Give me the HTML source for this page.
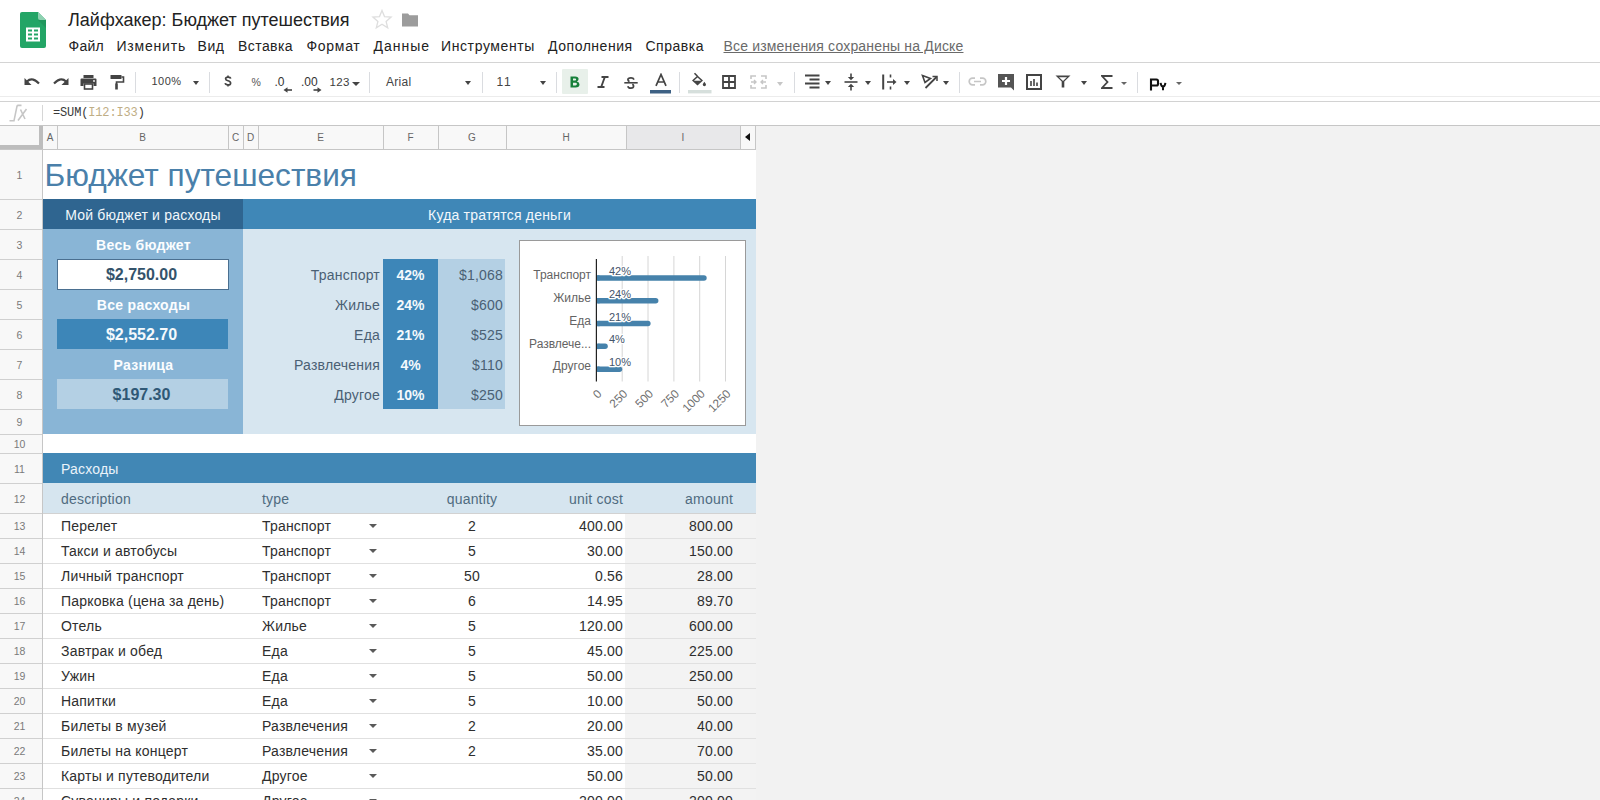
<!DOCTYPE html><html><head><meta charset='utf-8'><style>
*{margin:0;padding:0;box-sizing:border-box}
html,body{width:1600px;height:800px;overflow:hidden;background:#fff;font-family:"Liberation Sans", sans-serif}
.a{position:absolute}
.t{position:absolute;white-space:nowrap;line-height:1}
.menu{font-size:14px;color:#222;letter-spacing:0.25px}
.sep{position:absolute;width:1px;background:#dadce0;top:72px;height:21px}
.dd{position:absolute;width:0;height:0;border-left:3.5px solid transparent;border-right:3.5px solid transparent;border-top:4px solid #444}
.rh{position:absolute;left:-1.5px;width:42px;text-align:center;font-size:10.5px;color:#7a7a7a;line-height:1}
.c{position:absolute;white-space:nowrap;font-size:14px;letter-spacing:0.2px;line-height:1}
</style></head><body>
<svg class="a" style="left:20px;top:12px" width="26" height="36" viewBox="0 0 26 36">
<path d="M2 0 H18 L26 8 V34 Q26 36 24 36 H2 Q0 36 0 34 V2 Q0 0 2 0 Z" fill="#23a566"/>
<path d="M18 0 L26 8 H20 Q18 8 18 6 Z" fill="#8ed1b1"/>
<path d="M18 8 L26 16 V8 Z" fill="#1e8e57" opacity="0.6"/>
<rect x="6" y="15.5" width="14" height="14" fill="#fff"/>
<rect x="8" y="17.5" width="4" height="2" fill="#23a566"/><rect x="14" y="17.5" width="4" height="2" fill="#23a566"/>
<rect x="8" y="21.5" width="4" height="2" fill="#23a566"/><rect x="14" y="21.5" width="4" height="2" fill="#23a566"/>
<rect x="8" y="25.5" width="4" height="2" fill="#23a566"/><rect x="14" y="25.5" width="4" height="2" fill="#23a566"/>
</svg>
<div class="t" style="left:68px;top:11px;font-size:18px;color:#222">Лайфхакер: Бюджет путешествия</div>
<svg class="a" style="left:369.5px;top:7px" width="24" height="24" viewBox="0 0 24 24"><path d="M12 3.5l2.5 6.1 6.6.5-5 4.3 1.6 6.4L12 17.3l-5.7 3.5 1.6-6.4-5-4.3 6.6-.5z" fill="none" stroke="#dedede" stroke-width="1.3"/></svg>
<svg class="a" style="left:401px;top:12px" width="18" height="16" viewBox="0 0 18 16"><path d="M1 1.5h6l1.5 1.8H17v11.2H1z" fill="#9c9c9c"/></svg>
<div class="t menu" style="left:68.5px;top:39px;letter-spacing:0.25px">Файл</div>
<div class="t menu" style="left:116.5px;top:39px;letter-spacing:0.79px">Изменить</div>
<div class="t menu" style="left:197.5px;top:39px;letter-spacing:0.55px">Вид</div>
<div class="t menu" style="left:238px;top:39px;letter-spacing:0.43px">Вставка</div>
<div class="t menu" style="left:306.5px;top:39px;letter-spacing:0.7px">Формат</div>
<div class="t menu" style="left:373.5px;top:39px;letter-spacing:1.0px">Данные</div>
<div class="t menu" style="left:441px;top:39px;letter-spacing:0.61px">Инструменты</div>
<div class="t menu" style="left:548px;top:39px;letter-spacing:0.54px">Дополнения</div>
<div class="t menu" style="left:645.5px;top:39px;letter-spacing:0.5px">Справка</div>
<div class="t menu" style="left:723.5px;top:39px;color:#6a6a6a;letter-spacing:0.17px;text-decoration:underline;text-underline-offset:1px">Все изменения сохранены на Диске</div>
<div class="a" style="left:0;top:62px;width:1600px;height:1px;background:#d4d4d4"></div>
<div class="a" style="left:0;top:96px;width:1600px;height:1px;background:#ececec"></div>
<div class="a" style="left:0;top:101px;width:1600px;height:1px;background:#d2d2d2"></div>
<div class="sep" style="left:135px"></div>
<div class="sep" style="left:209px"></div>
<div class="sep" style="left:369px"></div>
<div class="sep" style="left:482px"></div>
<div class="sep" style="left:556px"></div>
<div class="sep" style="left:679px"></div>
<div class="sep" style="left:794px"></div>
<div class="sep" style="left:959px"></div>
<div class="sep" style="left:1137px"></div>
<svg class="a" style="left:23px;top:75px" width="18" height="14" viewBox="0 0 18 14"><path d="M4 6.5 Q9 1.5 16 8.5" fill="none" stroke="#444" stroke-width="2.2"/><path d="M1.5 3 V10 H8.5 Z" fill="#444"/></svg>
<svg class="a" style="left:52px;top:75px" width="18" height="14" viewBox="0 0 18 14"><path d="M14 6.5 Q9 1.5 2 8.5" fill="none" stroke="#444" stroke-width="2.2"/><path d="M16.5 3 V10 H9.5 Z" fill="#444"/></svg>
<svg class="a" style="left:80px;top:74px" width="17" height="16" viewBox="0 0 17 16"><rect x="3.5" y="1" width="10" height="3" fill="#444"/><path d="M0.5 5.5 Q0.5 4.5 1.5 4.5 H15.5 Q16.5 4.5 16.5 5.5 V12 H13.5 V9.5 H3.5 V12 H0.5 Z" fill="#444"/><rect x="4.5" y="10" width="8" height="5" fill="none" stroke="#444" stroke-width="1.6"/><circle cx="14" cy="7" r="0.9" fill="#fff"/></svg>
<svg class="a" style="left:110px;top:74px" width="15" height="16" viewBox="0 0 15 16"><rect x="0.5" y="1" width="11" height="4" rx="0.5" fill="#444"/><path d="M11.5 3 H13.5 V8 H6.5 V10" fill="none" stroke="#444" stroke-width="1.6"/><rect x="5.2" y="9.5" width="2.6" height="6" fill="#444"/></svg>
<div class="t" style="left:151.5px;top:76px;font-size:11px;letter-spacing:0.5px;color:#3c3c3c">100%</div>
<div class="dd" style="left:193px;top:81px"></div>
<svg class="a" style="left:224px;top:75px" width="8" height="12" viewBox="0 0 8 12"><path d="M6.6 3.6 Q6.4 2.1 4 2.1 Q1.6 2.1 1.6 3.8 Q1.6 5.2 4 5.8 Q6.6 6.4 6.6 8.2 Q6.6 9.9 4 9.9 Q1.5 9.9 1.2 8.2" stroke="#444" stroke-width="1.7" fill="none"/><path d="M4 0.6V2.3M4 9.7V11.4" stroke="#444" stroke-width="1.5"/></svg>
<div class="t" style="left:251.5px;top:76.5px;font-size:10.5px;color:#555">%</div>
<div class="t" style="left:274.5px;top:76px;font-size:12px;color:#333">.0</div>
<svg class="a" style="left:282.5px;top:87px" width="10" height="6" viewBox="0 0 10 6"><path d="M4 3H9" stroke="#444" stroke-width="1.6"/><path d="M0.5 3L4.5 0.2V5.8Z" fill="#444"/></svg>
<div class="t" style="left:301px;top:76px;font-size:12px;color:#333">.00</div>
<svg class="a" style="left:312.5px;top:87px" width="9" height="6" viewBox="0 0 9 6"><path d="M0.5 3H5" stroke="#444" stroke-width="1.6"/><path d="M8.5 3L4.5 0.2V5.8Z" fill="#444"/></svg>
<div class="t" style="left:329.5px;top:76.5px;font-size:11.5px;letter-spacing:0.4px;color:#3c3c3c">123</div>
<div class="dd" style="left:351.5px;top:82px;border-left-width:4px;border-right-width:4px"></div>
<div class="t" style="left:386px;top:76px;font-size:12px;letter-spacing:0.3px;color:#444">Arial</div>
<div class="dd" style="left:465px;top:81px"></div>
<div class="t" style="left:496.5px;top:76px;font-size:12px;letter-spacing:1.6px;color:#444">11</div>
<div class="dd" style="left:540px;top:81px"></div>
<div class="a" style="left:562px;top:69px;width:26px;height:25px;background:#e8f0ea;border-radius:1px"></div>
<svg class="a" style="left:570px;top:76px" width="10" height="12" viewBox="0 0 10 12"><path d="M0.5 0.5H5.2Q8.6 0.5 8.6 3.1Q8.6 4.9 6.9 5.6Q9.5 6.2 9.5 8.5Q9.5 11.5 5.6 11.5H0.5Z" fill="#17803a"/><path d="M3 2.5H5Q6.2 2.5 6.2 3.5Q6.2 4.6 5 4.6H3ZM3 6.8H5.4Q6.9 6.8 6.9 8.1Q6.9 9.5 5.4 9.5H3Z" fill="#e8f0ea"/></svg>
<svg class="a" style="left:597px;top:76px" width="12" height="12" viewBox="0 0 12 12"><path d="M4.5 1H11.5M0.5 11H7.5M7.8 1L4.2 11" stroke="#444" stroke-width="1.9" fill="none"/></svg>
<svg class="a" style="left:624px;top:77px" width="14" height="12" viewBox="0 0 14 12"><path d="M0.3 5.8H13.7" stroke="#444" stroke-width="1.6"/><path d="M10 2.6 Q9.4 0.9 7 0.9 Q3.9 0.9 3.9 2.8 Q3.9 3.9 5.5 4.6" stroke="#444" stroke-width="1.7" fill="none"/><path d="M8.3 7.2 Q9.6 7.9 9.6 9 Q9.6 11.1 6.9 11.1 Q4.3 11.1 3.8 9.2" stroke="#444" stroke-width="1.7" fill="none"/></svg>
<svg class="a" style="left:650px;top:73px" width="22" height="21" viewBox="0 0 22 21"><path d="M6 12.8L11 1.5L16 12.8M7.8 9H14.2" stroke="#444" stroke-width="1.7" fill="none"/><rect x="0" y="17" width="21" height="3.5" fill="#3e6184"/></svg>
<svg class="a" style="left:688px;top:72px" width="24" height="22" viewBox="0 0 24 22"><path d="M9.5 3.6L15 8.6L9.5 13.6L4 8.6Z" fill="#444"/><path d="M5.9 8.7L9.5 5.4L13.1 8.7Z" fill="#fff"/><path d="M6.5 1.2L9.3 4" stroke="#444" stroke-width="1.6"/><path d="M16.3 9.8 Q18 12 18 12.6 A1.6 1.6 0 0 1 14.8 12.6 Q14.8 12 16.3 9.8Z" fill="#444"/><rect x="0" y="18" width="23.5" height="3.4" fill="#d6dfdc"/></svg>
<svg class="a" style="left:722px;top:75px" width="14" height="14" viewBox="0 0 14 14"><path d="M1 1H13V13H1ZM7 1V13M1 7H13" stroke="#444" stroke-width="1.8" fill="none"/></svg>
<svg class="a" style="left:750px;top:75px" width="17" height="14" viewBox="0 0 17 14"><path d="M1 4V1H6M11 1H16V4M16 10V13H11M6 13H1V10" stroke="#c6c6c6" stroke-width="1.6" fill="none"/><path d="M1 7H6M4 5L6 7L4 9M16 7H11M13 5L11 7L13 9" stroke="#c6c6c6" stroke-width="1.4" fill="none"/></svg>
<div class="dd" style="left:777px;top:82px;border-top-color:#c6c6c6"></div>
<svg class="a" style="left:805px;top:74px" width="15" height="15" viewBox="0 0 15 15"><path d="M0 1.5H14.5M4.5 5.5H14.5M0 9.5H14.5M4.5 13.5H14.5" stroke="#444" stroke-width="1.8"/></svg>
<div class="dd" style="left:825px;top:81px"></div>
<svg class="a" style="left:844px;top:73px" width="14" height="18" viewBox="0 0 14 18"><path d="M0.5 9H13.5" stroke="#444" stroke-width="1.6"/><path d="M7 0.5V5" stroke="#444" stroke-width="1.6"/><path d="M3.8 4L7 7.2L10.2 4Z" fill="#444"/><path d="M7 17.5V13" stroke="#444" stroke-width="1.6"/><path d="M3.8 14L7 10.8L10.2 14Z" fill="#444"/></svg>
<div class="dd" style="left:864.5px;top:81px"></div>
<svg class="a" style="left:882px;top:74px" width="15" height="16" viewBox="0 0 15 16"><path d="M1.2 0.5V15.5" stroke="#444" stroke-width="2"/><path d="M8.5 0.5V3.5M8.5 12.5V15.5" stroke="#444" stroke-width="1.6"/><path d="M5 8H12" stroke="#444" stroke-width="1.6"/><path d="M11 5L14.5 8L11 11Z" fill="#444"/></svg>
<div class="dd" style="left:904px;top:81px"></div>
<svg class="a" style="left:921px;top:74px" width="17" height="15" viewBox="0 0 17 15"><path d="M1.5 1.5L9.5 4.5L4 8.5Z" fill="none" stroke="#444" stroke-width="1.6"/><path d="M4.5 14L15.5 3" stroke="#444" stroke-width="1.8"/><path d="M11.5 2.5H16V7" stroke="#444" stroke-width="1.5" fill="none"/></svg>
<div class="dd" style="left:943px;top:81px"></div>
<svg class="a" style="left:968px;top:77px" width="19" height="9" viewBox="0 0 19 9"><path d="M7 1.2H4.5A3.3 3.3 0 0 0 4.5 7.8H7M12 1.2H14.5A3.3 3.3 0 0 1 14.5 7.8H12M6 4.5H13" stroke="#c6c6c6" stroke-width="1.7" fill="none"/></svg>
<svg class="a" style="left:998px;top:74px" width="16" height="17" viewBox="0 0 16 17"><path d="M0 0H16V16.5L13 13.5H0Z" fill="#555"/><path d="M8 3V11M4 7H12" stroke="#fff" stroke-width="2.2"/></svg>
<svg class="a" style="left:1026px;top:74px" width="16" height="16" viewBox="0 0 16 16"><rect x="1" y="1" width="14" height="14" fill="none" stroke="#444" stroke-width="2"/><path d="M5 7V12M8 5V12M11 8.5V12" stroke="#444" stroke-width="1.6"/></svg>
<svg class="a" style="left:1055px;top:75px" width="16" height="13" viewBox="0 0 16 13"><path d="M0.5 0.5H15.5L9.3 6.5V12.5H6.7V6.5Z" fill="#444"/><path d="M4 2.3H12L8 6Z" fill="#fff"/></svg>
<div class="dd" style="left:1081px;top:81px"></div>
<svg class="a" style="left:1101px;top:75px" width="12" height="14" viewBox="0 0 12 14"><path d="M11.5 1H1L6.5 7L1 13H11.5" stroke="#444" stroke-width="1.8" fill="none"/></svg>
<div class="dd" style="left:1121px;top:82px;border-left-width:3px;border-right-width:3px;border-top-width:3px;border-top-color:#666"></div>
<svg class="a" style="left:1148px;top:75.5px" width="22" height="16" viewBox="0 0 22 16"><path d="M3 14.5V3.5H8.5Q10 3.5 10 5V8Q10 9.5 8.5 9.5H3" stroke="#111" stroke-width="2.1" fill="none"/><path d="M12.6 6.8Q13 10.2 15 10.6Q17 10.2 17.4 6.8M15 10.4V14.3" stroke="#111" stroke-width="2" fill="none"/></svg>
<div class="dd" style="left:1176px;top:82px;border-left-width:3px;border-right-width:3px;border-top-width:3px;border-top-color:#666"></div>
<svg class="a" style="left:4px;top:100px" width="32" height="25" viewBox="0 0 32 25"><path d="M5.5 20.8H10L13 6.2Q13.2 5.4 14.2 5.4H17.5M14 20.5L22.5 9M16.5 9.5L21 19" stroke="#c6c6c6" stroke-width="1.6" fill="none"/></svg>
<div class="a" style="left:42px;top:105px;width:1px;height:16px;background:#d6d6d6"></div>
<div class="t" style="left:53px;top:106.5px;font-family:'Liberation Mono',monospace;font-size:12px;letter-spacing:-0.15px;color:#3a3a3a">=SUM(<span style="color:#bfae85">I12:I33</span>)</div>
<div class="a" style="left:0;top:125px;width:1600px;height:1px;background:#c6c6c6"></div>
<div class="a" style="left:756px;top:126px;width:844px;height:674px;background:#f2f2f2"></div>
<div class="a" style="left:0;top:126px;width:756px;height:23px;background:#f8f8f8"></div>
<div class="a" style="left:627px;top:126px;width:113px;height:23px;background:#e8e8ea"></div>
<div class="a" style="left:57px;top:126px;width:1px;height:23px;background:#c6c6c6"></div>
<div class="t" style="left:43px;width:14px;top:132.5px;text-align:center;font-size:10px;color:#666">A</div>
<div class="a" style="left:228px;top:126px;width:1px;height:23px;background:#c6c6c6"></div>
<div class="t" style="left:57px;width:171px;top:132.5px;text-align:center;font-size:10px;color:#666">B</div>
<div class="a" style="left:243px;top:126px;width:1px;height:23px;background:#c6c6c6"></div>
<div class="t" style="left:228px;width:15px;top:132.5px;text-align:center;font-size:10px;color:#666">C</div>
<div class="a" style="left:258px;top:126px;width:1px;height:23px;background:#c6c6c6"></div>
<div class="t" style="left:243px;width:15px;top:132.5px;text-align:center;font-size:10px;color:#666">D</div>
<div class="a" style="left:383px;top:126px;width:1px;height:23px;background:#c6c6c6"></div>
<div class="t" style="left:258px;width:125px;top:132.5px;text-align:center;font-size:10px;color:#666">E</div>
<div class="a" style="left:438px;top:126px;width:1px;height:23px;background:#c6c6c6"></div>
<div class="t" style="left:383px;width:55px;top:132.5px;text-align:center;font-size:10px;color:#666">F</div>
<div class="a" style="left:506px;top:126px;width:1px;height:23px;background:#c6c6c6"></div>
<div class="t" style="left:438px;width:68px;top:132.5px;text-align:center;font-size:10px;color:#666">G</div>
<div class="a" style="left:626px;top:126px;width:1px;height:23px;background:#c6c6c6"></div>
<div class="t" style="left:506px;width:120px;top:132.5px;text-align:center;font-size:10px;color:#666">H</div>
<div class="a" style="left:740px;top:126px;width:1px;height:23px;background:#c6c6c6"></div>
<div class="t" style="left:626px;width:114px;top:132.5px;text-align:center;font-size:10px;color:#666">I</div>
<div class="a" style="left:755px;top:126px;width:1px;height:23px;background:#c6c6c6"></div>
<div class="a" style="left:0;top:149px;width:756px;height:1px;background:#c6c6c6"></div>
<div class="a" style="left:745px;top:133px;width:0;height:0;border-top:4.5px solid transparent;border-bottom:4.5px solid transparent;border-right:5px solid #111"></div>
<div class="a" style="left:39px;top:126px;width:4px;height:23px;background:#bdbdbd"></div>
<div class="a" style="left:0;top:145px;width:43px;height:4px;background:#bdbdbd"></div>
<div class="a" style="left:0;top:150px;width:42px;height:650px;background:#f8f8f8"></div>
<div class="a" style="left:42px;top:150px;width:1px;height:650px;background:#c6c6c6"></div>
<div class="a" style="left:0;top:199px;width:42px;height:1px;background:#d0d0d0"></div>
<div class="rh" style="top:169.5px">1</div>
<div class="a" style="left:0;top:229px;width:42px;height:1px;background:#d0d0d0"></div>
<div class="rh" style="top:209.5px">2</div>
<div class="a" style="left:0;top:259px;width:42px;height:1px;background:#d0d0d0"></div>
<div class="rh" style="top:239.5px">3</div>
<div class="a" style="left:0;top:289px;width:42px;height:1px;background:#d0d0d0"></div>
<div class="rh" style="top:269.5px">4</div>
<div class="a" style="left:0;top:319px;width:42px;height:1px;background:#d0d0d0"></div>
<div class="rh" style="top:299.5px">5</div>
<div class="a" style="left:0;top:349px;width:42px;height:1px;background:#d0d0d0"></div>
<div class="rh" style="top:329.5px">6</div>
<div class="a" style="left:0;top:379px;width:42px;height:1px;background:#d0d0d0"></div>
<div class="rh" style="top:359.5px">7</div>
<div class="a" style="left:0;top:409px;width:42px;height:1px;background:#d0d0d0"></div>
<div class="rh" style="top:389.5px">8</div>
<div class="a" style="left:0;top:434px;width:42px;height:1px;background:#d0d0d0"></div>
<div class="rh" style="top:417.0px">9</div>
<div class="a" style="left:0;top:453px;width:42px;height:1px;background:#d0d0d0"></div>
<div class="rh" style="top:439.0px">10</div>
<div class="a" style="left:0;top:483px;width:42px;height:1px;background:#d0d0d0"></div>
<div class="rh" style="top:463.5px">11</div>
<div class="a" style="left:0;top:513px;width:42px;height:1px;background:#d0d0d0"></div>
<div class="rh" style="top:493.5px">12</div>
<div class="a" style="left:0;top:538px;width:42px;height:1px;background:#d0d0d0"></div>
<div class="rh" style="top:521.0px">13</div>
<div class="a" style="left:0;top:563px;width:42px;height:1px;background:#d0d0d0"></div>
<div class="rh" style="top:546.0px">14</div>
<div class="a" style="left:0;top:588px;width:42px;height:1px;background:#d0d0d0"></div>
<div class="rh" style="top:571.0px">15</div>
<div class="a" style="left:0;top:613px;width:42px;height:1px;background:#d0d0d0"></div>
<div class="rh" style="top:596.0px">16</div>
<div class="a" style="left:0;top:638px;width:42px;height:1px;background:#d0d0d0"></div>
<div class="rh" style="top:621.0px">17</div>
<div class="a" style="left:0;top:663px;width:42px;height:1px;background:#d0d0d0"></div>
<div class="rh" style="top:646.0px">18</div>
<div class="a" style="left:0;top:688px;width:42px;height:1px;background:#d0d0d0"></div>
<div class="rh" style="top:671.0px">19</div>
<div class="a" style="left:0;top:713px;width:42px;height:1px;background:#d0d0d0"></div>
<div class="rh" style="top:696.0px">20</div>
<div class="a" style="left:0;top:738px;width:42px;height:1px;background:#d0d0d0"></div>
<div class="rh" style="top:721.0px">21</div>
<div class="a" style="left:0;top:763px;width:42px;height:1px;background:#d0d0d0"></div>
<div class="rh" style="top:746.0px">22</div>
<div class="a" style="left:0;top:788px;width:42px;height:1px;background:#d0d0d0"></div>
<div class="rh" style="top:771.0px">23</div>
<div class="a" style="left:0;top:813px;width:42px;height:1px;background:#d0d0d0"></div>
<div class="rh" style="top:796.0px">24</div>
<div class="a" style="left:43px;top:150px;width:713px;height:650px;background:#fff"></div>
<div class="t" style="left:44.5px;top:159.5px;font-size:31.6px;color:#4a80aa">Бюджет путешествия</div>
<div class="a" style="left:43px;top:199px;width:200px;height:30px;background:#2f6590"></div>
<div class="a" style="left:243px;top:199px;width:513px;height:30px;background:#3f87b7"></div>
<div class="t" style="left:43px;width:200px;top:208px;text-align:center;font-size:14px;letter-spacing:0.2px;color:#f2f8fc">Мой бюджет и расходы</div>
<div class="t" style="left:243px;width:513px;top:208px;text-align:center;font-size:14px;letter-spacing:0.2px;color:#f2f8fc">Куда тратятся деньги</div>
<div class="a" style="left:43px;top:229px;width:200px;height:205px;background:#89b5d6"></div>
<div class="a" style="left:243px;top:229px;width:513px;height:205px;background:#d7e6f0"></div>
<div class="a" style="left:57px;top:259px;width:172px;height:31px;background:#fff;border:1px solid #4a6f90"></div>
<div class="a" style="left:57px;top:319px;width:171px;height:30px;background:#3d86b8"></div>
<div class="a" style="left:57px;top:379px;width:171px;height:30px;background:#b4d0e4"></div>
<div class="t" style="left:58px;width:171px;top:238px;text-align:center;font-size:14px;font-weight:bold;color:#fbfdff;letter-spacing:0.3px">Весь бюджет</div>
<div class="t" style="left:58px;width:171px;top:298px;text-align:center;font-size:14px;font-weight:bold;color:#fbfdff;letter-spacing:0.3px">Все расходы</div>
<div class="t" style="left:58px;width:171px;top:358px;text-align:center;font-size:14px;font-weight:bold;color:#fbfdff;letter-spacing:0.3px">Разница</div>
<div class="t" style="left:56px;width:171px;top:267px;text-align:center;font-size:16px;font-weight:bold;color:#34536b">$2,750.00</div>
<div class="t" style="left:56px;width:171px;top:327px;text-align:center;font-size:16px;font-weight:bold;color:#f4f9fc">$2,552.70</div>
<div class="t" style="left:56px;width:171px;top:387px;text-align:center;font-size:16px;font-weight:bold;color:#2f5876">$197.30</div>
<div class="a" style="left:383px;top:259px;width:55px;height:150px;background:#3d86b8"></div>
<div class="a" style="left:438px;top:259px;width:67px;height:150px;background:#b4d0e4"></div>
<div class="t" style="left:243px;width:137px;top:268px;text-align:right;font-size:14px;letter-spacing:0.2px;color:#4a6074">Транспорт</div>
<div class="t" style="left:383px;width:55px;top:268px;text-align:center;font-size:14px;font-weight:bold;color:#f4f9fc">42%</div>
<div class="t" style="left:438px;width:65px;top:268px;text-align:right;font-size:14px;letter-spacing:0.2px;color:#4a6074">$1,068</div>
<div class="t" style="left:243px;width:137px;top:298px;text-align:right;font-size:14px;letter-spacing:0.2px;color:#4a6074">Жилье</div>
<div class="t" style="left:383px;width:55px;top:298px;text-align:center;font-size:14px;font-weight:bold;color:#f4f9fc">24%</div>
<div class="t" style="left:438px;width:65px;top:298px;text-align:right;font-size:14px;letter-spacing:0.2px;color:#4a6074">$600</div>
<div class="t" style="left:243px;width:137px;top:328px;text-align:right;font-size:14px;letter-spacing:0.2px;color:#4a6074">Еда</div>
<div class="t" style="left:383px;width:55px;top:328px;text-align:center;font-size:14px;font-weight:bold;color:#f4f9fc">21%</div>
<div class="t" style="left:438px;width:65px;top:328px;text-align:right;font-size:14px;letter-spacing:0.2px;color:#4a6074">$525</div>
<div class="t" style="left:243px;width:137px;top:358px;text-align:right;font-size:14px;letter-spacing:0.2px;color:#4a6074">Развлечения</div>
<div class="t" style="left:383px;width:55px;top:358px;text-align:center;font-size:14px;font-weight:bold;color:#f4f9fc">4%</div>
<div class="t" style="left:438px;width:65px;top:358px;text-align:right;font-size:14px;letter-spacing:0.2px;color:#4a6074">$110</div>
<div class="t" style="left:243px;width:137px;top:388px;text-align:right;font-size:14px;letter-spacing:0.2px;color:#4a6074">Другое</div>
<div class="t" style="left:383px;width:55px;top:388px;text-align:center;font-size:14px;font-weight:bold;color:#f4f9fc">10%</div>
<div class="t" style="left:438px;width:65px;top:388px;text-align:right;font-size:14px;letter-spacing:0.2px;color:#4a6074">$250</div>
<div class="a" style="left:519px;top:240px;width:227px;height:186px;background:#fff;border:1px solid #9a9a9a"></div>
<svg class="a" style="left:519px;top:240px" width="227" height="186" viewBox="0 0 227 186"><line x1="103.2" y1="16" x2="103.2" y2="141.5" stroke="#d6d6d6" stroke-width="1"/><line x1="129.0" y1="16" x2="129.0" y2="141.5" stroke="#d6d6d6" stroke-width="1"/><line x1="154.9" y1="16" x2="154.9" y2="141.5" stroke="#d6d6d6" stroke-width="1"/><line x1="180.7" y1="16" x2="180.7" y2="141.5" stroke="#d6d6d6" stroke-width="1"/><line x1="206.5" y1="16" x2="206.5" y2="141.5" stroke="#d6d6d6" stroke-width="1"/><rect x="77.39999999999998" y="35.2" width="110.3" height="5.5" rx="2.75" fill="#4682ab"/><rect x="77.39999999999998" y="35.2" width="3" height="5.5" fill="#4682ab"/><text x="72" y="39.2" text-anchor="end" font-family="Liberation Sans" font-size="12" fill="#636363">Транспорт</text><text x="89.9" y="34.9" font-family="Liberation Sans" font-size="11" fill="#44546a" stroke="#fff" stroke-width="2.5" paint-order="stroke" stroke-linejoin="round">42%</text><rect x="77.39999999999998" y="58.0" width="62.0" height="5.5" rx="2.75" fill="#4682ab"/><rect x="77.39999999999998" y="58.0" width="3" height="5.5" fill="#4682ab"/><text x="72" y="62.0" text-anchor="end" font-family="Liberation Sans" font-size="12" fill="#636363">Жилье</text><text x="89.9" y="57.7" font-family="Liberation Sans" font-size="11" fill="#44546a" stroke="#fff" stroke-width="2.5" paint-order="stroke" stroke-linejoin="round">24%</text><rect x="77.39999999999998" y="80.8" width="54.2" height="5.5" rx="2.75" fill="#4682ab"/><rect x="77.39999999999998" y="80.8" width="3" height="5.5" fill="#4682ab"/><text x="72" y="84.8" text-anchor="end" font-family="Liberation Sans" font-size="12" fill="#636363">Еда</text><text x="89.9" y="80.5" font-family="Liberation Sans" font-size="11" fill="#44546a" stroke="#fff" stroke-width="2.5" paint-order="stroke" stroke-linejoin="round">21%</text><rect x="77.39999999999998" y="103.6" width="11.4" height="5.5" rx="2.75" fill="#4682ab"/><rect x="77.39999999999998" y="103.6" width="3" height="5.5" fill="#4682ab"/><text x="72" y="107.6" text-anchor="end" font-family="Liberation Sans" font-size="12" fill="#636363">Развлече...</text><text x="89.9" y="103.3" font-family="Liberation Sans" font-size="11" fill="#44546a" stroke="#fff" stroke-width="2.5" paint-order="stroke" stroke-linejoin="round">4%</text><rect x="77.39999999999998" y="126.4" width="25.8" height="5.5" rx="2.75" fill="#4682ab"/><rect x="77.39999999999998" y="126.4" width="3" height="5.5" fill="#4682ab"/><text x="72" y="130.4" text-anchor="end" font-family="Liberation Sans" font-size="12" fill="#636363">Другое</text><text x="89.9" y="126.1" font-family="Liberation Sans" font-size="11" fill="#44546a" stroke="#fff" stroke-width="2.5" paint-order="stroke" stroke-linejoin="round">10%</text><line x1="77.4" y1="19" x2="77.4" y2="141.5" stroke="#222" stroke-width="1.2"/><text x="83.4" y="154.5" transform="rotate(-45 83.4 154.5)" text-anchor="end" font-family="Liberation Sans" font-size="11.8" fill="#6e6e6e">0</text><text x="109.2" y="154.5" transform="rotate(-45 109.2 154.5)" text-anchor="end" font-family="Liberation Sans" font-size="11.8" fill="#6e6e6e">250</text><text x="135.0" y="154.5" transform="rotate(-45 135.0 154.5)" text-anchor="end" font-family="Liberation Sans" font-size="11.8" fill="#6e6e6e">500</text><text x="160.9" y="154.5" transform="rotate(-45 160.9 154.5)" text-anchor="end" font-family="Liberation Sans" font-size="11.8" fill="#6e6e6e">750</text><text x="186.7" y="154.5" transform="rotate(-45 186.7 154.5)" text-anchor="end" font-family="Liberation Sans" font-size="11.8" fill="#6e6e6e">1000</text><text x="212.5" y="154.5" transform="rotate(-45 212.5 154.5)" text-anchor="end" font-family="Liberation Sans" font-size="11.8" fill="#6e6e6e">1250</text></svg>
<div class="a" style="left:43px;top:453px;width:713px;height:30px;background:#4187b5"></div>
<div class="t" style="left:61px;top:462px;font-size:14px;letter-spacing:0.2px;color:#eaf3fa">Расходы</div>
<div class="a" style="left:43px;top:483px;width:713px;height:30px;background:#d6e5ef"></div>
<div class="a" style="left:43px;top:513px;width:713px;height:1px;background:#d2d2d2"></div>
<div class="t" style="left:61px;top:492px;font-size:14px;letter-spacing:0.2px;color:#4f6b80">description</div>
<div class="t" style="left:262px;top:492px;font-size:14px;letter-spacing:0.2px;color:#4f6b80">type</div>
<div class="t" style="left:438px;width:68px;top:492px;text-align:center;font-size:14px;letter-spacing:0.2px;color:#4f6b80">quantity</div>
<div class="t" style="left:506px;width:117px;top:492px;text-align:right;font-size:14px;letter-spacing:0.2px;color:#4f6b80">unit cost</div>
<div class="t" style="left:626px;width:107px;top:492px;text-align:right;font-size:14px;letter-spacing:0.2px;color:#4f6b80">amount</div>
<div class="a" style="left:625px;top:514px;width:131px;height:286px;background:#f3f3f3"></div>
<div class="a" style="left:43px;top:538px;width:713px;height:1px;background:#e0e0e0"></div>
<div class="c" style="left:61px;top:519px;color:#2e2e2e">Перелет</div>
<div class="c" style="left:262px;top:519px;color:#2e2e2e">Транспорт</div>
<div class="dd" style="left:368.5px;top:524px;border-left-width:4px;border-right-width:4px;border-top-width:4px;border-top-color:#5a5a5a"></div>
<div class="c" style="left:438px;width:68px;top:519px;text-align:center;color:#2e2e2e">2</div>
<div class="c" style="left:506px;width:117px;top:519px;text-align:right;color:#2e2e2e">400.00</div>
<div class="c" style="left:626px;width:107px;top:519px;text-align:right;color:#2e2e2e">800.00</div>
<div class="a" style="left:43px;top:563px;width:713px;height:1px;background:#e0e0e0"></div>
<div class="c" style="left:61px;top:544px;color:#2e2e2e">Такси и автобусы</div>
<div class="c" style="left:262px;top:544px;color:#2e2e2e">Транспорт</div>
<div class="dd" style="left:368.5px;top:549px;border-left-width:4px;border-right-width:4px;border-top-width:4px;border-top-color:#5a5a5a"></div>
<div class="c" style="left:438px;width:68px;top:544px;text-align:center;color:#2e2e2e">5</div>
<div class="c" style="left:506px;width:117px;top:544px;text-align:right;color:#2e2e2e">30.00</div>
<div class="c" style="left:626px;width:107px;top:544px;text-align:right;color:#2e2e2e">150.00</div>
<div class="a" style="left:43px;top:588px;width:713px;height:1px;background:#e0e0e0"></div>
<div class="c" style="left:61px;top:569px;color:#2e2e2e">Личный транспорт</div>
<div class="c" style="left:262px;top:569px;color:#2e2e2e">Транспорт</div>
<div class="dd" style="left:368.5px;top:574px;border-left-width:4px;border-right-width:4px;border-top-width:4px;border-top-color:#5a5a5a"></div>
<div class="c" style="left:438px;width:68px;top:569px;text-align:center;color:#2e2e2e">50</div>
<div class="c" style="left:506px;width:117px;top:569px;text-align:right;color:#2e2e2e">0.56</div>
<div class="c" style="left:626px;width:107px;top:569px;text-align:right;color:#2e2e2e">28.00</div>
<div class="a" style="left:43px;top:613px;width:713px;height:1px;background:#e0e0e0"></div>
<div class="c" style="left:61px;top:594px;color:#2e2e2e">Парковка (цена за день)</div>
<div class="c" style="left:262px;top:594px;color:#2e2e2e">Транспорт</div>
<div class="dd" style="left:368.5px;top:599px;border-left-width:4px;border-right-width:4px;border-top-width:4px;border-top-color:#5a5a5a"></div>
<div class="c" style="left:438px;width:68px;top:594px;text-align:center;color:#2e2e2e">6</div>
<div class="c" style="left:506px;width:117px;top:594px;text-align:right;color:#2e2e2e">14.95</div>
<div class="c" style="left:626px;width:107px;top:594px;text-align:right;color:#2e2e2e">89.70</div>
<div class="a" style="left:43px;top:638px;width:713px;height:1px;background:#e0e0e0"></div>
<div class="c" style="left:61px;top:619px;color:#2e2e2e">Отель</div>
<div class="c" style="left:262px;top:619px;color:#2e2e2e">Жилье</div>
<div class="dd" style="left:368.5px;top:624px;border-left-width:4px;border-right-width:4px;border-top-width:4px;border-top-color:#5a5a5a"></div>
<div class="c" style="left:438px;width:68px;top:619px;text-align:center;color:#2e2e2e">5</div>
<div class="c" style="left:506px;width:117px;top:619px;text-align:right;color:#2e2e2e">120.00</div>
<div class="c" style="left:626px;width:107px;top:619px;text-align:right;color:#2e2e2e">600.00</div>
<div class="a" style="left:43px;top:663px;width:713px;height:1px;background:#e0e0e0"></div>
<div class="c" style="left:61px;top:644px;color:#2e2e2e">Завтрак и обед</div>
<div class="c" style="left:262px;top:644px;color:#2e2e2e">Еда</div>
<div class="dd" style="left:368.5px;top:649px;border-left-width:4px;border-right-width:4px;border-top-width:4px;border-top-color:#5a5a5a"></div>
<div class="c" style="left:438px;width:68px;top:644px;text-align:center;color:#2e2e2e">5</div>
<div class="c" style="left:506px;width:117px;top:644px;text-align:right;color:#2e2e2e">45.00</div>
<div class="c" style="left:626px;width:107px;top:644px;text-align:right;color:#2e2e2e">225.00</div>
<div class="a" style="left:43px;top:688px;width:713px;height:1px;background:#e0e0e0"></div>
<div class="c" style="left:61px;top:669px;color:#2e2e2e">Ужин</div>
<div class="c" style="left:262px;top:669px;color:#2e2e2e">Еда</div>
<div class="dd" style="left:368.5px;top:674px;border-left-width:4px;border-right-width:4px;border-top-width:4px;border-top-color:#5a5a5a"></div>
<div class="c" style="left:438px;width:68px;top:669px;text-align:center;color:#2e2e2e">5</div>
<div class="c" style="left:506px;width:117px;top:669px;text-align:right;color:#2e2e2e">50.00</div>
<div class="c" style="left:626px;width:107px;top:669px;text-align:right;color:#2e2e2e">250.00</div>
<div class="a" style="left:43px;top:713px;width:713px;height:1px;background:#e0e0e0"></div>
<div class="c" style="left:61px;top:694px;color:#2e2e2e">Напитки</div>
<div class="c" style="left:262px;top:694px;color:#2e2e2e">Еда</div>
<div class="dd" style="left:368.5px;top:699px;border-left-width:4px;border-right-width:4px;border-top-width:4px;border-top-color:#5a5a5a"></div>
<div class="c" style="left:438px;width:68px;top:694px;text-align:center;color:#2e2e2e">5</div>
<div class="c" style="left:506px;width:117px;top:694px;text-align:right;color:#2e2e2e">10.00</div>
<div class="c" style="left:626px;width:107px;top:694px;text-align:right;color:#2e2e2e">50.00</div>
<div class="a" style="left:43px;top:738px;width:713px;height:1px;background:#e0e0e0"></div>
<div class="c" style="left:61px;top:719px;color:#2e2e2e">Билеты в музей</div>
<div class="c" style="left:262px;top:719px;color:#2e2e2e">Развлечения</div>
<div class="dd" style="left:368.5px;top:724px;border-left-width:4px;border-right-width:4px;border-top-width:4px;border-top-color:#5a5a5a"></div>
<div class="c" style="left:438px;width:68px;top:719px;text-align:center;color:#2e2e2e">2</div>
<div class="c" style="left:506px;width:117px;top:719px;text-align:right;color:#2e2e2e">20.00</div>
<div class="c" style="left:626px;width:107px;top:719px;text-align:right;color:#2e2e2e">40.00</div>
<div class="a" style="left:43px;top:763px;width:713px;height:1px;background:#e0e0e0"></div>
<div class="c" style="left:61px;top:744px;color:#2e2e2e">Билеты на концерт</div>
<div class="c" style="left:262px;top:744px;color:#2e2e2e">Развлечения</div>
<div class="dd" style="left:368.5px;top:749px;border-left-width:4px;border-right-width:4px;border-top-width:4px;border-top-color:#5a5a5a"></div>
<div class="c" style="left:438px;width:68px;top:744px;text-align:center;color:#2e2e2e">2</div>
<div class="c" style="left:506px;width:117px;top:744px;text-align:right;color:#2e2e2e">35.00</div>
<div class="c" style="left:626px;width:107px;top:744px;text-align:right;color:#2e2e2e">70.00</div>
<div class="a" style="left:43px;top:788px;width:713px;height:1px;background:#e0e0e0"></div>
<div class="c" style="left:61px;top:769px;color:#2e2e2e">Карты и путеводители</div>
<div class="c" style="left:262px;top:769px;color:#2e2e2e">Другое</div>
<div class="dd" style="left:368.5px;top:774px;border-left-width:4px;border-right-width:4px;border-top-width:4px;border-top-color:#5a5a5a"></div>
<div class="c" style="left:506px;width:117px;top:769px;text-align:right;color:#2e2e2e">50.00</div>
<div class="c" style="left:626px;width:107px;top:769px;text-align:right;color:#2e2e2e">50.00</div>
<div class="a" style="left:43px;top:813px;width:713px;height:1px;background:#e0e0e0"></div>
<div class="c" style="left:61px;top:794px;color:#2e2e2e">Сувениры и подарки</div>
<div class="c" style="left:262px;top:794px;color:#2e2e2e">Другое</div>
<div class="dd" style="left:368.5px;top:799px;border-left-width:4px;border-right-width:4px;border-top-width:4px;border-top-color:#5a5a5a"></div>
<div class="c" style="left:506px;width:117px;top:794px;text-align:right;color:#2e2e2e">200.00</div>
<div class="c" style="left:626px;width:107px;top:794px;text-align:right;color:#2e2e2e">200.00</div>
</body></html>
